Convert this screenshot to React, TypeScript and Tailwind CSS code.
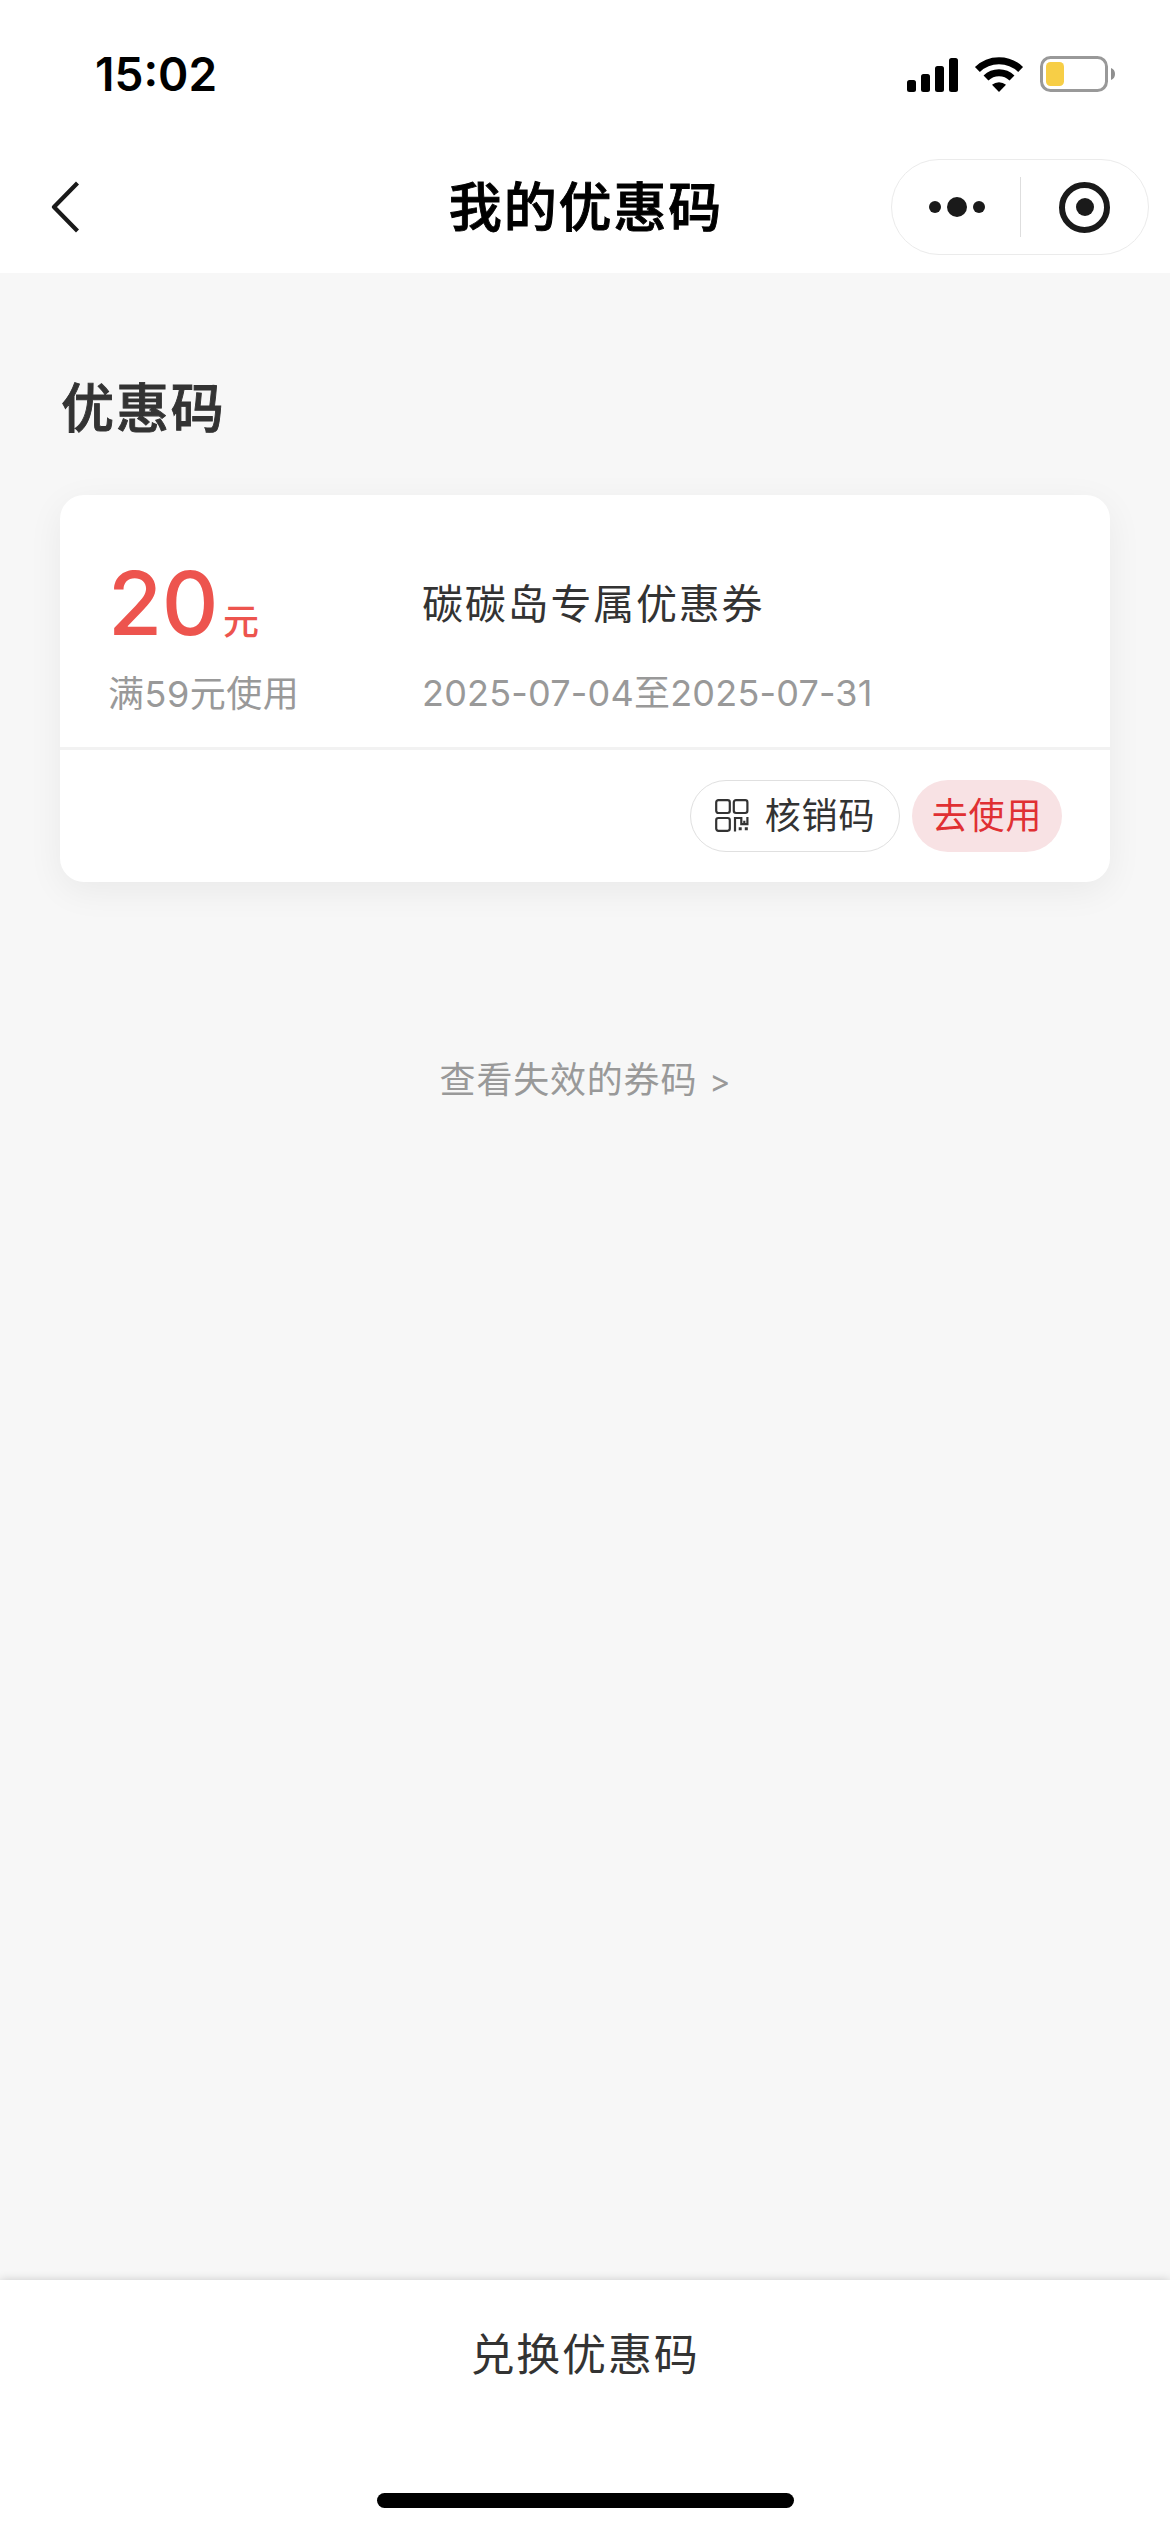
const cjk = "font-['Inter','Noto_Sans_CJK_SC',sans-serif]";

function SignalIcon() {
  return (
    <svg width="51" height="34" viewBox="0 0 51 34" className="block">
      <rect x="0" y="22" width="9" height="12" rx="2.5" />
      <rect x="14" y="16" width="9" height="18" rx="2.5" />
      <rect x="28" y="8" width="9" height="26" rx="2.5" />
      <rect x="42" y="0" width="9" height="34" rx="2.5" />
    </svg>
  );
}

function WifiIcon() {
  return (
    <svg width="50" height="36" viewBox="0 0 50 36" className="ml-4 block">
      <g fill="none" stroke="#000" strokeWidth="7">
        <path d="M3.4 13.4 A31 31 0 0 1 46.6 13.4" />
        <path d="M12 22 A18.5 18.5 0 0 1 38 22" />
      </g>
      <path d="M25 36 L18 28.8 A10.5 10.5 0 0 1 32 28.8 Z" />
    </svg>
  );
}

function BatteryIcon() {
  return (
    <svg width="76" height="36" viewBox="0 0 76 36" className="ml-4 block">
      <rect x="1.5" y="1.5" width="65" height="33" rx="9" fill="none" stroke="#999" strokeWidth="3" />
      <rect x="6" y="6" width="18" height="24" rx="4.5" fill="#f7ce46" />
      <path d="M71 12 A6.5 6.5 0 0 1 71 24 Z" fill="#8f8f8f" />
    </svg>
  );
}

function QrIcon() {
  return (
    <svg width="34" height="34" viewBox="0 0 34 34" fill="none" stroke="#333" strokeWidth="2.2" className="block">
      <rect x="1.2" y="1.2" width="13.6" height="12.8" rx="2.2" />
      <rect x="18.8" y="1.2" width="13.6" height="12.8" rx="2.2" />
      <rect x="1.2" y="19" width="13.6" height="12.8" rx="2.2" />
      <path d="M20 32.5 V19 H26.3 V25.2 H32.4 V18 M29.3 21.8 V25" />
      <path d="M23.7 29.7 H26.7 M29.8 29.7 H32.8" strokeWidth="3" />
    </svg>
  );
}

export default function App() {
  return (
    <div className={`flex h-[2532px] w-[1170px] flex-col overflow-hidden bg-[#f7f7f7] text-[#333] ${cjk}`}>
      <header className="h-[273px] shrink-0 bg-white text-black">
        <div className="flex h-[141px] items-start justify-between pl-[95px] pr-[54px]">
          <div className="mt-[46px] font-['Inter'] text-[46px] font-semibold leading-[56px]">15:02</div>
          <div className="mt-[56px] flex items-end">
            <SignalIcon />
            <WifiIcon />
            <BatteryIcon />
          </div>
        </div>
        <div className="grid h-[132px] grid-cols-[1fr_auto_1fr] items-center">
          <svg width="28" height="52" viewBox="0 0 28 52" className="ml-[51px] block" fill="none" stroke="#1a1a1a" strokeWidth="4.2">
            <path d="M26.5 2 L3 26 L26.5 50" strokeLinejoin="round" />
          </svg>
          <h1 className="pl-0.5 pt-0.5 text-[53px] font-medium leading-[74px] tracking-[1.9px] [-webkit-text-stroke:0.9px_#000]">我的优惠码</h1>
          <div className="mr-[21px] flex h-24 w-[258px] items-center justify-self-end rounded-full border border-[#ebebeb]">
            <div className="flex w-32 items-center justify-center gap-1.5 pl-[2px]">
              <i className="size-3 rounded-full bg-[#1a1a1a]" />
              <i className="size-5 rounded-full bg-[#1a1a1a]" />
              <i className="size-3 rounded-full bg-[#1a1a1a]" />
            </div>
            <div className="h-[60px] w-px bg-[#dedede]" />
            <div className="flex flex-1 justify-center">
              <div className="flex size-[51px] items-center justify-center rounded-full border-6 border-[#1a1a1a]">
                <i className="size-[18px] rounded-full bg-[#1a1a1a]" />
              </div>
            </div>
          </div>
        </div>
      </header>

      <main className="flex-1 px-[60px] pt-[99px]">
        <h2 className="pl-px text-[53px] font-medium leading-[74px] tracking-[1.9px] [-webkit-text-stroke:0.9px_#333]">优惠码</h2>
        <section className="mt-[49px] h-[387px] rounded-3xl bg-white shadow-[0_9px_36px_rgba(0,0,0,0.06)]">
          <div className="grid h-[255px] grid-cols-[314px_1fr] border-b-3 border-[#f2f2f2] pl-12">
            <div>
              <div className="mt-[54px] flex h-[108px] items-baseline text-[#ed544e]">
                <span className="text-[88px] font-medium leading-[108px] tracking-[-0.5px]">20</span>
                <span className="ml-[5px] text-[36px] font-medium">元</span>
              </div>
              <div className="mt-3 whitespace-nowrap text-[36px] leading-[50px] tracking-[0.5px] text-[#999]">满59元使用</div>
            </div>
            <div>
              <div className="mt-[79px] text-[41px] leading-[60px] tracking-[1.8px]">碳碳岛专属优惠券</div>
              <div className="mt-[34px] whitespace-nowrap text-[36px] leading-[50px] tracking-[0.2px] text-[#999]">2025-07-04至2025-07-31</div>
            </div>
          </div>
          <div className="flex h-[132px] items-center justify-end gap-3 pr-12">
            <button className="flex h-[72px] w-[210px] items-center justify-center gap-4 rounded-full border border-[#e0e0e0] text-[36px] tracking-[0.9px]">
              <QrIcon />
              <span>核销码</span>
            </button>
            <button className="h-[72px] w-[150px] rounded-full bg-[#f8e2e4] text-[36px] tracking-[0.9px] text-[#e03033]">去使用</button>
          </div>
        </section>
        <div className="mt-[173px] text-center text-[36px] leading-[50px] tracking-[0.8px] text-[#999]">
          查看失效的券码<span className="ml-3 text-[32px] tracking-normal">&gt;</span>
        </div>
      </main>

      <footer className="flex h-[252px] shrink-0 flex-col items-center justify-between bg-white pb-6 pt-[43px] shadow-[0_0_9px_rgba(0,0,0,0.18)]">
        <div className="text-[44px] leading-[64px] tracking-[1.8px]">兑换优惠码</div>
        <div className="h-[15px] w-[417px] rounded-full bg-black" />
      </footer>
    </div>
  );
}
